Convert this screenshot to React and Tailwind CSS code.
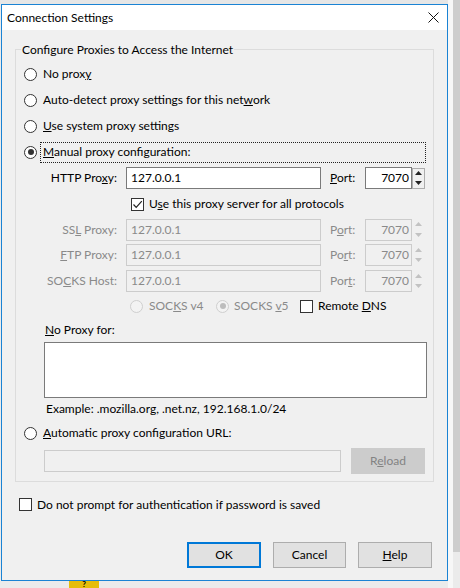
import React from "react";

const dis = "text-[#8a8a8a]";

const Radio = ({ checked, disabled }) => (
    <span className={`w-[13px] h-[13px] rounded-full border flex items-center justify-center shrink-0 ${disabled ? "border-[#cfcfcf] bg-[#f3f3f3]" : "border-[#333] bg-white"}`}>
        {checked && <span className={`w-[6px] h-[6px] rounded-full ${disabled ? "bg-[#bdbdbd]" : "bg-[#333]"}`} />}
    </span>
);

const Check = ({ checked }) => (
    <span className="w-[13px] h-[13px] border border-[#333] bg-white flex items-center justify-center shrink-0">
        {checked && (
            <svg width="11" height="11" viewBox="0 0 11 11">
                <polyline points="1.5,5.5 4.2,8.3 9.8,2.2" fill="none" stroke="#222" strokeWidth="1.2" />
            </svg>
        )}
    </span>
);

const Spin = ({ disabled }) => (
    <div className={`w-[13px] h-[21px] flex flex-col ${disabled ? "" : "border border-[#adadad]"}`}>
        <div className="flex-1 flex items-center justify-center">
            <svg width="7" height="4" viewBox="0 0 7 4"><polygon points="0,4 3.5,0 7,4" fill={disabled ? "#c2c2c2" : "#222"} /></svg>
        </div>
        <div className="flex-1 flex items-center justify-center">
            <svg width="7" height="4" viewBox="0 0 7 4"><polygon points="0,0 3.5,4 7,0" fill={disabled ? "#c2c2c2" : "#222"} /></svg>
        </div>
    </div>
);

const ProxyRow = ({ label, port, disabled, h = "h-[26px]" }) => (
    <div className={`flex items-center ${h} ml-[28px]`}>
        <div className={`w-[74px] text-right pr-[1px] ${disabled ? dis : ""}`}>{label}</div>
        <div className={`ml-[8px] w-[195px] h-[22px] border flex items-center px-[4px] ${disabled ? "border-[#cccccc] bg-[#f0f0f0] " + dis : "border-[#7a7a7a] bg-white"}`}>127.0.0.1</div>
        <div className={`ml-[9px] w-[35px] ${disabled ? dis : ""}`}>{port}</div>
        <div className={`w-[47px] h-[22px] border flex items-center justify-end pr-[2px] ${disabled ? "border-[#cccccc] bg-[#f0f0f0] " + dis : "border-[#7a7a7a] bg-white"}`}>7070</div>
        <Spin disabled={disabled} />
    </div>
);

const Btn = ({ children, primary, w = "w-[74px]" }) => (
    <div className={`${w} h-[26px] flex items-center justify-center bg-[#e1e1e1] ${primary ? "border-2 border-[#0078d7]" : "border border-[#adadad]"}`}>{children}</div>
);

export default function App() {
    return (
        <div className="w-[460px] h-[588px] bg-[#ebebeb] flex overflow-hidden text-[12px] text-black leading-none" style={{ fontFamily: "'Segoe UI', Lato, 'Noto Sans', sans-serif" }}>
            <div className="w-[448px] shrink-0 flex flex-col">
                <div className="h-[4px] bg-[#e6e6e6]" />
                <div className="ml-[1px] w-[447px] h-[577px] border border-[#1a83d4] bg-[#f0f0f0] flex flex-col">
                    {/* title bar */}
                    <div className="h-[25px] bg-white flex items-center justify-between pl-[5px] pr-[8px]">
                        <span className="text-[12px]">Connection Settings</span>
                        <svg width="11" height="11" viewBox="0 0 11 11">
                            <path d="M0.5 0.5 L10.5 10.5 M10.5 0.5 L0.5 10.5" stroke="#111" strokeWidth="1" />
                        </svg>
                    </div>

                    {/* group */}
                    <div className="mt-[19px] ml-[13px] w-[419px] h-[433px] border border-[#dcdcdc] flex flex-col">
                        <span className="-mt-[8px] ml-[5px] h-[16px] w-fit px-[1px] bg-[#f0f0f0] flex items-center">Configure Proxies to Access the Internet</span>
                        <div className="mt-[3px]">
                            <div className="h-[26px] flex items-center ml-[8px] gap-[6px]"><Radio /><span>No prox<u>y</u></span></div>
                            <div className="h-[26px] flex items-center ml-[8px] gap-[6px]"><Radio /><span>Auto-detect proxy settings for this net<u>w</u>ork</span></div>
                            <div className="h-[26px] flex items-center ml-[8px] gap-[6px]"><Radio /><span><u>U</u>se system proxy settings</span></div>
                            <div className="h-[26px] flex items-center ml-[8px]">
                                <Radio checked />
                                <div className="ml-[3px] w-[386px] h-[21px] border border-dotted border-[#222] flex items-center pl-[2px]"><span><u>M</u>anual proxy configuration:</span></div>
                            </div>

                            <ProxyRow label={<span>HTTP Pro<u>x</u>y:</span>} port={<span><u>P</u>ort:</span>} />
                            <div className="h-[26px] flex items-center ml-[115px] gap-[5px]"><Check checked /><span>U<u>s</u>e this proxy server for all protocols</span></div>
                            <ProxyRow disabled h="h-[25px]" label={<span>SS<u>L</u> Proxy:</span>} port={<span>P<u>o</u>rt:</span>} />
                            <ProxyRow disabled label={<span><u>F</u>TP Proxy:</span>} port={<span>Po<u>r</u>t:</span>} />
                            <ProxyRow disabled label={<span>SO<u>C</u>KS Host:</span>} port={<span>Por<u>t</u>:</span>} />

                            <div className="h-[24px] flex items-center ml-[114px]">
                                <div className="w-[86px] flex items-center gap-[6px]"><Radio disabled /><span className={dis}>SOC<u>K</u>S v4</span></div>
                                <div className="w-[84px] flex items-center gap-[5px]"><Radio disabled checked /><span className={dis}>SOCKS <u>v</u>5</span></div>
                                <div className="flex items-center gap-[5px]"><Check /><span>Remote <u>D</u>NS</span></div>
                            </div>

                            <div className="h-[24px] flex items-center ml-[29px]"><span><u>N</u>o Proxy for:</span></div>
                            <div className="ml-[28px] w-[383px] h-[56px] border border-[#7a7a7a] bg-white" />
                            <div className="h-[22px] flex items-center ml-[30px]"><span>Example: .mozilla.org, .net.nz, 192.168.1.0/24</span></div>
                            <div className="h-[26px] flex items-center ml-[8px] gap-[6px]"><Radio /><span><u>A</u>utomatic proxy configuration URL:</span></div>
                            <div className="h-[30px] flex items-center ml-[28px]">
                                <div className="w-[297px] h-[22px] border border-[#cccccc] bg-[#f0f0f0]" />
                                <div className="ml-[10px] w-[74px] h-[26px] border border-[#cccccc] bg-[#cccccc] flex items-center justify-center text-[#838383]"><span>R<u>e</u>load</span></div>
                            </div>
                        </div>
                    </div>

                    <div className="mt-[11px] h-[23px] flex items-center ml-[17px] gap-[5px]">
                        <Check /><span>Do not prompt for authent<u>i</u>cation if password is saved</span>
                    </div>

                    <div className="mt-[26px] flex justify-end pr-[15px] gap-[12px]">
                        <Btn primary>OK</Btn>
                        <Btn w="w-[73px]">Cancel</Btn>
                        <Btn><span><u>H</u>elp</span></Btn>
                    </div>
                </div>
                <div className="flex-1 flex">
                    <div className="ml-[69px] w-[30px] h-[7px] bg-[#e6bd0a] flex justify-center items-start">
                        <span className="font-bold text-[8px] leading-[7px]">?</span>
                    </div>
                </div>
            </div>
            <div className="w-[5px] bg-[#f7f7f7]" />
            <div className="w-[7px] h-[552px] bg-[#cdcdcd]" />
        </div>
    );
}
